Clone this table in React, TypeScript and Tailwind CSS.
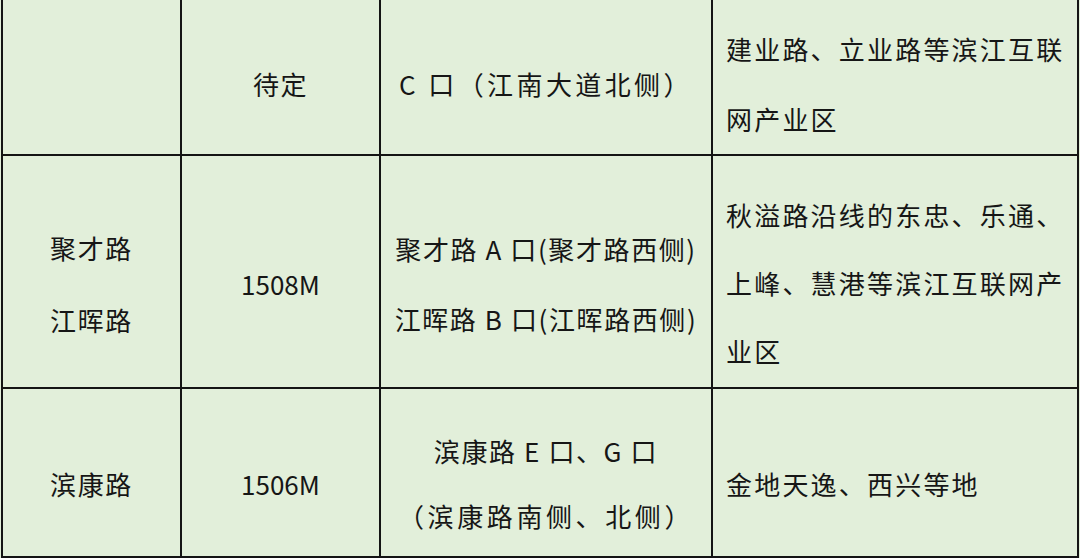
import React from "react";

const font = { fontFamily: '"Noto Sans CJK SC", "Noto Sans", sans-serif' };

function Cell({
  children,
  align = "center",
  pt,
}: {
  children: React.ReactNode;
  align?: "center" | "left";
  pt: string;
}) {
  return (
    <div
      className={
        "flex flex-col justify-center border-r-2 border-b-2 border-[#141414] " +
        (align === "center" ? "items-center text-center " : "items-start pl-[13px] tracking-[2.2px] ") +
        pt
      }
    >
      {children}
    </div>
  );
}

function Line({ children, h = "leading-[70px]" }: { children: React.ReactNode; h?: string }) {
  return <div className={"whitespace-pre " + h}>{children}</div>;
}

function Num({ children }: { children: React.ReactNode }) {
  return <span className="tracking-normal">{children}</span>;
}

export default function App() {
  return (
    <div
      className="w-[1080px] h-[558px] overflow-hidden bg-[#e2efda] text-[#161616] text-[26px] tracking-[1.6px]"
      style={font}
    >
      <div className="ml-[1px] border-l-2 border-[#141414] grid grid-cols-[179px_199px_332px_366px] grid-rows-[156px_233px_169px] w-[1078px]">
        {/* Row 1 */}
        <Cell pt="pt-[14px]">
          <Line> </Line>
        </Cell>
        <Cell pt="pt-[14px]">
          <Line>待定</Line>
        </Cell>
        <Cell pt="pt-[14px]">
          <Line h="leading-[70px] tracking-[3.4px]">C 口（江南大道北侧）</Line>
        </Cell>
        <Cell pt="pt-[14px]" align="left">
          <Line>建业路、立业路等滨江互联</Line>
          <Line>网产业区</Line>
        </Cell>

        {/* Row 2 */}
        <Cell pt="pt-[25px]">
          <Line h="leading-[72px]">聚才路</Line>
          <Line h="leading-[72px]">江晖路</Line>
        </Cell>
        <Cell pt="pt-[25px]">
          <Line>
            <Num>1508M</Num>
          </Line>
        </Cell>
        <Cell pt="pt-[25px]">
          <Line>聚才路 A 口(聚才路西侧)</Line>
          <Line>江晖路 B 口(江晖路西侧)</Line>
        </Cell>
        <Cell pt="pt-[23px]" align="left">
          <Line h="leading-[68px]">秋溢路沿线的东忠、乐通、</Line>
          <Line h="leading-[68px]">上峰、慧港等滨江互联网产</Line>
          <Line h="leading-[68px]">业区</Line>
        </Cell>

        {/* Row 3 */}
        <Cell pt="pt-[22px]">
          <Line>滨康路</Line>
        </Cell>
        <Cell pt="pt-[22px]">
          <Line>
            <Num>1506M</Num>
          </Line>
        </Cell>
        <Cell pt="pt-[21px]">
          <Line h="leading-[65px]">滨康路 E 口、G 口</Line>
          <Line h="leading-[65px] tracking-[3.6px]">（滨康路南侧、北侧）</Line>
        </Cell>
        <Cell pt="pt-[22px]" align="left">
          <Line>金地天逸、西兴等地</Line>
        </Cell>
      </div>
    </div>
  );
}
